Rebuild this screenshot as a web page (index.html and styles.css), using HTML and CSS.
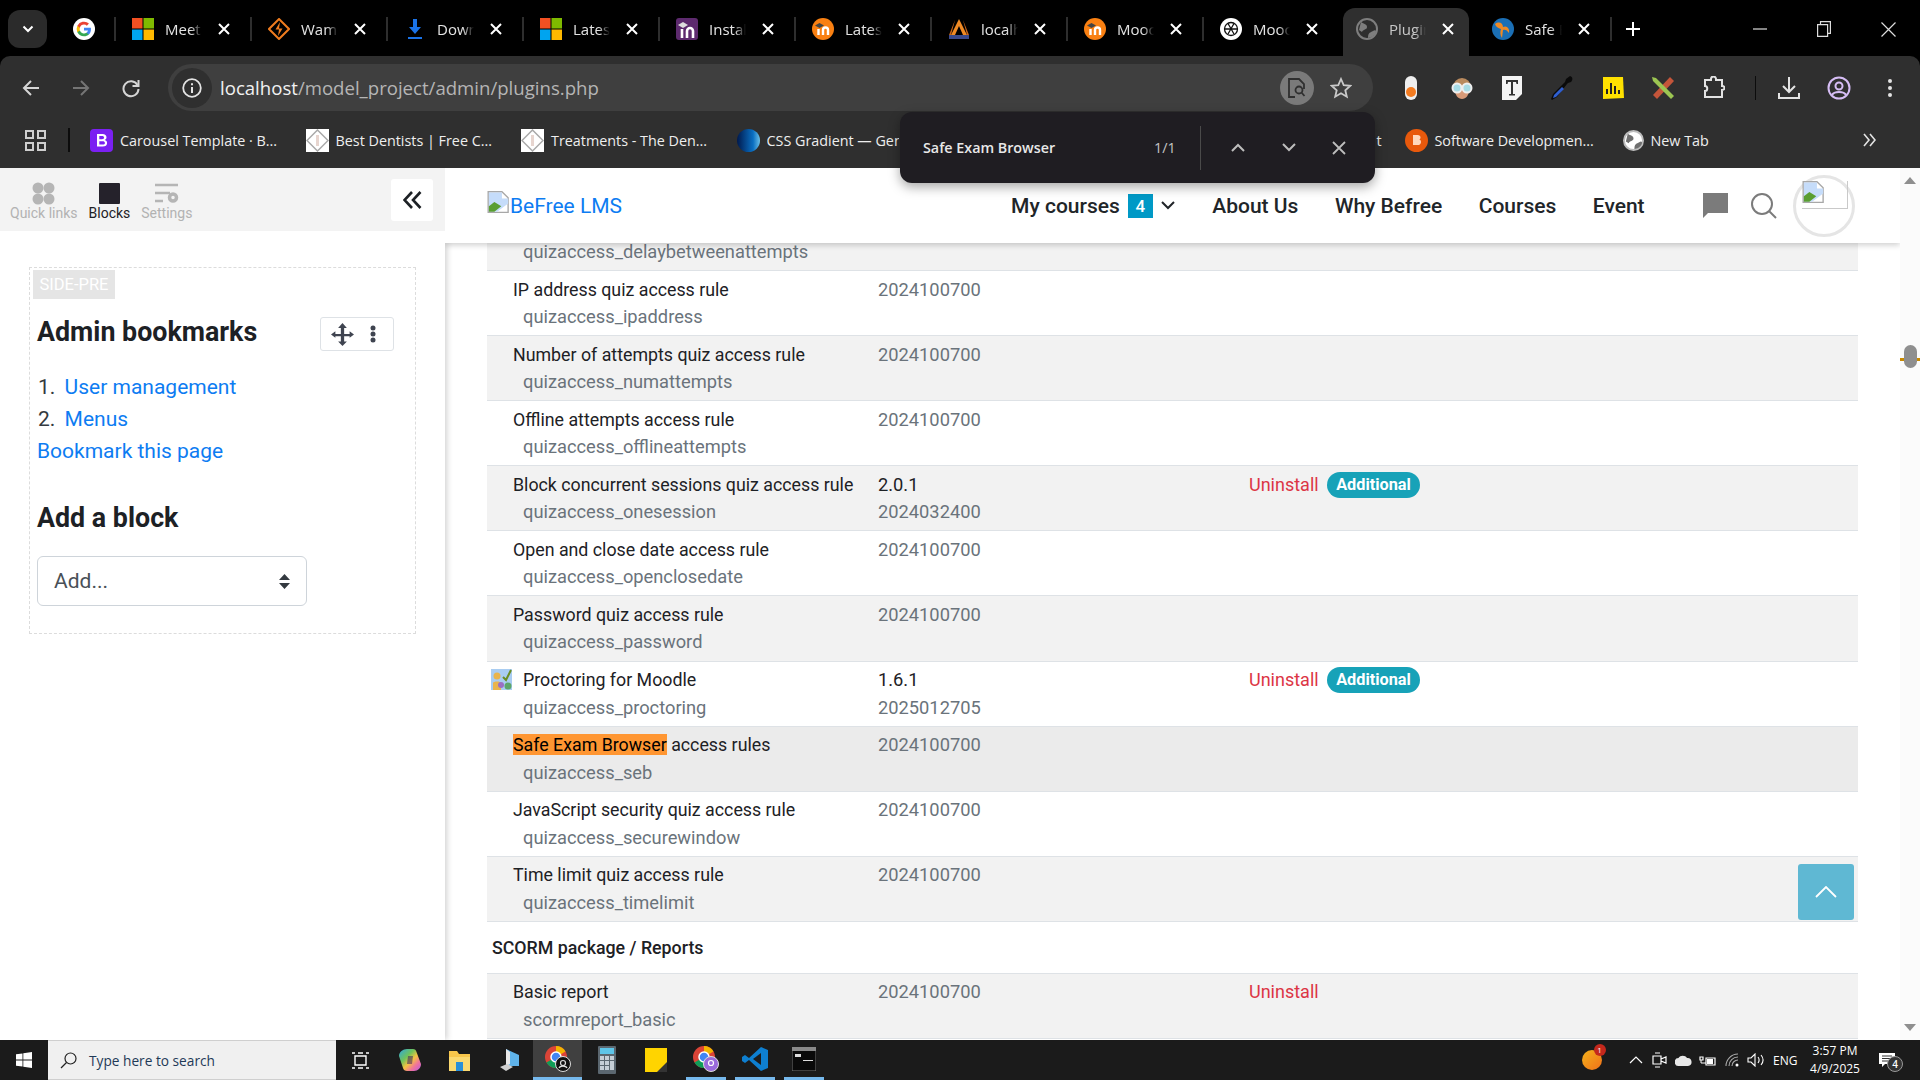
FILE: index.html
```html
<!DOCTYPE html>
<html lang="en">
<head>
	<meta charset="UTF-8">
	<title>Plugins overview</title>
	<link rel="stylesheet" href="styles.css">
</head>
<body>
	<div class="tabstrip">
		<div class="tab-search"><svg width="12" height="8" viewBox="0 0 12 8"><path d="M1.500 1.500 6 6l4.500-4.500" fill="none" stroke="#fff" stroke-width="2"/></svg></div>
		<div class="tab tab-pinned">
			<svg width="22" height="22" viewBox="0 0 24 24"><circle cx="12" cy="12" r="12" fill="#fff"/><path d="M19.600 12.200c0-.6 0-1.100-.2-1.600H12v3h4.300a3.700 3.700 0 0 1-1.600 2.400v2h2.600c1.500-1.400 2.300-3.400 2.300-5.800z" fill="#4285f4"/><path d="M12 20c2.200 0 4-.7 5.300-2l-2.600-2a4.800 4.800 0 0 1-7.200-2.500H4.800v2A8 8 0 0 0 12 20z" fill="#34a853"/><path d="M7.500 13.500a4.800 4.800 0 0 1 0-3v-2H4.800a8 8 0 0 0 0 7z" fill="#fbbc05"/><path d="M12 7.200c1.200 0 2.300.4 3.100 1.200l2.300-2.300A8 8 0 0 0 4.800 8.500l2.700 2A4.800 4.800 0 0 1 12 7.200z" fill="#ea4335"/></svg>
		</div>
		<div class="tab">
			<svg width="22" height="22" viewBox="0 0 22 22"><path fill="#f25022" d="M0 0h10.500v10.500H0z"/><path fill="#7fba00" d="M11.500 0H22v10.500H11.500z"/><path fill="#00a4ef" d="M0 11.500h10.500V22H0z"/><path fill="#ffb900" d="M11.500 11.500H22V22H11.500z"/></svg>
			<span class="tab-title">Meet</span><svg class="tab-close" width="12" height="12" viewBox="0 0 12 12"><path d="m1 1 10 10M11 1 1 11" stroke="#fff" stroke-width="2"/></svg>
		</div>
		<div class="tab">
			<svg width="22" height="22" viewBox="0 0 22 22"><path d="M11 1 21 11 11 21 1 11z" fill="none" stroke="#f07c1e" stroke-width="2"/><path d="M12 4 7.500 11.500H11L10 18l4.500-7.500H11z" fill="#f07c1e"/></svg>
			<span class="tab-title">Wamp</span><svg class="tab-close" width="12" height="12" viewBox="0 0 12 12"><path d="m1 1 10 10M11 1 1 11" stroke="#fff" stroke-width="2"/></svg>
		</div>
		<div class="tab">
			<svg width="22" height="22" viewBox="0 0 22 22"><path d="M9 1h4v8h4l-6 7-6-7h4zM4 19h14v2H4z" fill="#1a73e8"/></svg>
			<span class="tab-title">Down</span><svg class="tab-close" width="12" height="12" viewBox="0 0 12 12"><path d="m1 1 10 10M11 1 1 11" stroke="#fff" stroke-width="2"/></svg>
		</div>
		<div class="tab">
			<svg width="22" height="22" viewBox="0 0 22 22"><path fill="#f25022" d="M0 0h10.500v10.500H0z"/><path fill="#7fba00" d="M11.500 0H22v10.500H11.500z"/><path fill="#00a4ef" d="M0 11.500h10.500V22H0z"/><path fill="#ffb900" d="M11.500 11.500H22V22H11.500z"/></svg>
			<span class="tab-title">Latest</span><svg class="tab-close" width="12" height="12" viewBox="0 0 12 12"><path d="m1 1 10 10M11 1 1 11" stroke="#fff" stroke-width="2"/></svg>
		</div>
		<div class="tab">
			<svg width="22" height="22" viewBox="0 0 22 22"><rect width="22" height="22" rx="3" fill="#5d2a6e"/><path d="M6 20V11M11 20v-7a3 3 0 0 1 6 0v7" fill="none" stroke="#fff" stroke-width="2.600"/><path d="M2 7l5-3 5 3-5 3z" fill="#ddd"/></svg>
			<span class="tab-title">Instal</span><svg class="tab-close" width="12" height="12" viewBox="0 0 12 12"><path d="m1 1 10 10M11 1 1 11" stroke="#fff" stroke-width="2"/></svg>
		</div>
		<div class="tab">
			<svg width="22" height="22" viewBox="0 0 22 22"><circle cx="11" cy="11" r="11" fill="#f98012"/><path d="M6.500 17v-6M11 17v-5a2.500 2.500 0 0 1 5 0v5" fill="none" stroke="#fff" stroke-width="2.400"/><path d="M3 7.500 7.500 5 12 7.500 7.500 10z" fill="#444"/></svg>
			<span class="tab-title">Latest</span><svg class="tab-close" width="12" height="12" viewBox="0 0 12 12"><path d="m1 1 10 10M11 1 1 11" stroke="#fff" stroke-width="2"/></svg>
		</div>
		<div class="tab">
			<svg width="22" height="22" viewBox="0 0 22 22"><path d="M11 1 3 17h4l4-9 4 9h4z" fill="#f08a24"/><path d="M7 2 1 17h2zM15 2l6 15h-2z" fill="#c9651a"/><path d="M1 17h20v4H1z" fill="#3a4a8c"/></svg>
			<span class="tab-title">localh</span><svg class="tab-close" width="12" height="12" viewBox="0 0 12 12"><path d="m1 1 10 10M11 1 1 11" stroke="#fff" stroke-width="2"/></svg>
		</div>
		<div class="tab">
			<svg width="22" height="22" viewBox="0 0 22 22"><circle cx="11" cy="11" r="11" fill="#f98012"/><path d="M6.500 17v-6M11 17v-5a2.500 2.500 0 0 1 5 0v5" fill="none" stroke="#fff" stroke-width="2.400"/><path d="M3 7.500 7.500 5 12 7.500 7.500 10z" fill="#444"/></svg>
			<span class="tab-title">Mooc</span><svg class="tab-close" width="12" height="12" viewBox="0 0 12 12"><path d="m1 1 10 10M11 1 1 11" stroke="#fff" stroke-width="2"/></svg>
		</div>
		<div class="tab tab-before-active">
			<svg width="22" height="22" viewBox="0 0 22 22"><circle cx="11" cy="11" r="11" fill="#fff"/><g fill="none" stroke="#111" stroke-width="1.300"><circle cx="11" cy="11" r="6.500"/><path d="M8 5.500 14 16M14 5.500 8 16M5 11h12"/></g></svg>
			<span class="tab-title">Mooc</span><svg class="tab-close" width="12" height="12" viewBox="0 0 12 12"><path d="m1 1 10 10M11 1 1 11" stroke="#fff" stroke-width="2"/></svg>
		</div>
		<div class="tab tab-active">
			<svg width="22" height="22" viewBox="0 0 22 22"><circle cx="11" cy="11" r="10" fill="none" stroke="#7e7e7e" stroke-width="2"/><path d="M5 4c3 2 6 2 6 5s-4 2-5 5l-3-2zM12 20c0-4 1-5 3-6s4-3 5-1c0 3-3 6-8 7z" fill="#7e7e7e"/></svg>
			<span class="tab-title">Plugin</span><svg class="tab-close" width="12" height="12" viewBox="0 0 12 12"><path d="m1 1 10 10M11 1 1 11" stroke="#fff" stroke-width="2"/></svg>
		</div>
		<div class="tab">
			<svg width="22" height="22" viewBox="0 0 22 22"><circle cx="11" cy="11" r="11" fill="#1b6fb5"/><path d="M3 6c4-3 8-1 8 3 4-2 7 2 6 6-2-3-4-4-6-3l-1 8c-2-3-2-6-1-9C6 10 4 9 3 6z" fill="#f08a24"/></svg>
			<span class="tab-title">Safe E</span><svg class="tab-close" width="12" height="12" viewBox="0 0 12 12"><path d="m1 1 10 10M11 1 1 11" stroke="#fff" stroke-width="2"/></svg>
		</div>
		<div class="tab-new"><svg width="16" height="16" viewBox="0 0 16 16"><path d="M8 1v14M1 8h14" stroke="#fff" stroke-width="2"/></svg></div>
		<div class="window-controls">
			<span><svg width="14" height="14" viewBox="0 0 14 14"><path d="M0 7h14" stroke="#ddd" stroke-width="1.200"/></svg></span>
			<span><svg width="14" height="16" viewBox="0 0 14 16"><path d="M.6 3.600h10v11.800H.6zM3.500 3.500V.6h9.900v11.800h-2.500" fill="none" stroke="#ddd" stroke-width="1.200"/></svg></span>
			<span><svg width="15" height="15" viewBox="0 0 15 15"><path d="m.5.500 14 14M14.500.500l-14 14" stroke="#ddd" stroke-width="1.200"/></svg></span>
		</div>
	</div>

	<div class="toolbar">
		<span class="tool-btn"><svg width="18" height="18" viewBox="0 0 18 18"><path d="M17 9H2M9 2 2 9l7 7" fill="none" stroke="#d5d5d5" stroke-width="2"/></svg></span>
		<span class="tool-btn"><svg width="18" height="18" viewBox="0 0 18 18"><path d="M1 9h15M9 2l7 7-7 7" fill="none" stroke="#757575" stroke-width="2"/></svg></span>
		<span class="tool-btn"><svg width="20" height="20" viewBox="0 0 20 20"><path d="M16.500 7A7.500 7.500 0 1 0 17.500 11" fill="none" stroke="#d5d5d5" stroke-width="2"/><path d="M17.500 2v6h-6" fill="none" stroke="#d5d5d5" stroke-width="2"/></svg></span>
		<div class="omnibox">
			<span class="omni-info"><svg width="20" height="20" viewBox="0 0 20 20"><circle cx="10" cy="10" r="8.800" fill="none" stroke="#e3e3e3" stroke-width="1.800"/><path d="M10 9v6M10 5.200v2" stroke="#e3e3e3" stroke-width="2"/></svg></span>
			<span class="omni-url"><span class="omni-host">localhost</span>/model_project/admin/plugins.php</span>
			<span class="omni-lens"><svg width="18" height="20" viewBox="0 0 18 20"><path d="M7 19H1V1h10l5 5v5" fill="none" stroke="#2f2f2f" stroke-width="1.800"/><circle cx="11" cy="12" r="3.500" fill="none" stroke="#2f2f2f" stroke-width="1.800"/><path d="m13.500 14.500 3 3.500" stroke="#2f2f2f" stroke-width="1.800"/></svg></span>
			<span class="omni-star"><svg width="22" height="22" viewBox="0 0 22 22"><path d="m11 2 2.700 6.100 6.600.7-5 4.400 1.500 6.500-5.800-3.400-5.800 3.400 1.500-6.500-5-4.400 6.600-.7z" fill="none" stroke="#c9c9c9" stroke-width="1.800"/></svg></span>
		</div>
		<span class="ext-btn"><svg width="14" height="26" viewBox="0 0 14 26"><rect x="1" y="1" width="12" height="24" rx="6" fill="#eee"/><circle cx="7" cy="17" r="5" fill="#f37b20"/></svg></span>
		<span class="ext-btn"><svg width="24" height="24" viewBox="0 0 24 24"><circle cx="12" cy="11" r="9" fill="#b98a5e"/><path d="M5 14c0 5 3 9 7 9s7-4 7-9z" fill="#d79a78"/><circle cx="7" cy="12" r="4.500" fill="#a8dce6" stroke="#eee" stroke-width="2"/><circle cx="17" cy="12" r="4.500" fill="#a8dce6" stroke="#eee" stroke-width="2"/></svg></span>
		<span class="ext-btn"><svg width="20" height="24" viewBox="0 0 20 24"><path d="M0 0h20v18l-6 6H0z" fill="#f4f4f4"/><path d="M4 4h12v4h-1.500l-.5-2h-3v12h2v1.500H7V18h2V6H6l-.5 2H4z" fill="#333"/></svg></span>
		<span class="ext-btn"><svg width="24" height="26" viewBox="0 0 24 26"><path d="M20 1c3 1 3 4 1 6l-3 1-1 1L7 22l-5 3-1-1 2-5L14 8l1-1 1-3z" fill="#0a0a0a"/><path d="M12 12 4 20l-1 3 3-1 8-8z" fill="#2f5fd0"/></svg></span>
		<span class="ext-btn"><svg width="24" height="24" viewBox="0 0 24 24"><path d="M2 1h20l1 21-21 1z" fill="#ffe100"/><path d="M6 18v-5M10 18V7M14 18v-8M18 18v-4" stroke="#222" stroke-width="2"/></svg></span>
		<span class="ext-btn"><svg width="24" height="24" viewBox="0 0 24 24"><path d="M2 19 19 1l4 4L6 23z" fill="#c4553a"/><path d="M1 1l4 1 18 18-3 3L2 5z" fill="#9cc552"/></svg></span>
		<span class="ext-btn"><svg width="22" height="24" viewBox="0 0 22 24"><path d="M2 4h6V3a2.500 2.500 0 0 1 5 0v1h6v6c2 0 2.500 1 2.500 2s-.5 2-2.500 2v7H2v-6c3 0 3-5 0-5z" fill="none" stroke="#e3e3e3" stroke-width="2"/></svg></span>
		<span class="tool-sep"></span>
		<span class="ext-btn"><svg width="24" height="24" viewBox="0 0 24 24"><path d="M12 1v15M6 10l6 6 6-6M2 17v5h20v-5" fill="none" stroke="#e3e3e3" stroke-width="2"/></svg></span>
		<span class="ext-btn"><svg width="24" height="24" viewBox="0 0 24 24"><circle cx="12" cy="12" r="10.500" fill="none" stroke="#d6bdf5" stroke-width="2"/><circle cx="12" cy="10" r="3.500" fill="none" stroke="#d6bdf5" stroke-width="2"/><path d="M5 19c2-4 12-4 14 0" fill="none" stroke="#d6bdf5" stroke-width="2"/></svg></span>
		<span class="ext-btn"><svg width="6" height="20" viewBox="0 0 6 20"><circle cx="3" cy="3" r="2" fill="#e3e3e3"/><circle cx="3" cy="10" r="2" fill="#e3e3e3"/><circle cx="3" cy="17" r="2" fill="#e3e3e3"/></svg></span>
	</div>

	<div class="bookmarks">
		<span class="apps"><svg width="21" height="21" viewBox="0 0 21 21"><g fill="none" stroke="#cfcfcf" stroke-width="2"><path d="M1 1h7v7H1zM13 1h7v7h-7zM1 13h7v7H1zM13 13h7v7h-7z"/></g></svg></span>
		<span class="bm-sep"></span>
		<div class="bookmark">
			<svg width="23" height="23" viewBox="0 0 23 23"><rect width="23" height="23" rx="4" fill="#7b20f2"/><path d="M7 5h5.500c2.500 0 4 1.300 4 3.200 0 1.300-.7 2.200-1.800 2.700 1.500.4 2.400 1.500 2.400 3 0 2.300-1.700 3.600-4.400 3.600H7zm2.300 2v3.300h2.700c1.400 0 2.100-.6 2.100-1.700S13.400 7 12 7zm0 5.200v3.400H12.600c1.500 0 2.300-.6 2.300-1.700s-.8-1.700-2.400-1.700z" fill="#fff" fill-rule="evenodd"/></svg>
			<span>Carousel Template · B...</span>
		</div>
		<div class="bookmark">
			<svg width="23" height="23" viewBox="0 0 23 23"><rect width="23" height="23" fill="#fff"/><path d="M11.500 1 22 11.500 11.500 22 1 11.500z" fill="none" stroke="#a9a9a9" stroke-width="1.500"/><path d="M10 6h3v11h-3z" fill="#e7d5cf"/></svg>
			<span>Best Dentists | Free C...</span>
		</div>
		<div class="bookmark">
			<svg width="23" height="23" viewBox="0 0 23 23"><rect width="23" height="23" fill="#fff"/><path d="M11.500 1 22 11.500 11.500 22 1 11.500z" fill="none" stroke="#a9a9a9" stroke-width="1.500"/><path d="M10 6h3v11h-3z" fill="#e7d5cf"/></svg>
			<span>Treatments - The Den...</span>
		</div>
		<div class="bookmark bookmark-gradient">
			<span class="gradient-dot"></span>
			<span class="gradient-text">CSS Gradient — Generator</span>
		</div>
		<div class="bookmark bookmark-hidden"><span>t</span></div>
		<div class="bookmark bookmark-wide">
			<svg width="23" height="23" viewBox="0 0 23 23"><circle cx="11.500" cy="11.500" r="11.500" fill="#e8590c"/><path d="M8 6h4.500c2 0 3 1 3 2.500 0 1-.5 1.700-1.300 2 1.100.3 1.800 1.200 1.800 2.400C16 15 14.700 16 12.700 16H8z" fill="#ffd8bd"/></svg>
			<span>Software Developmen...</span>
		</div>
		<div class="bookmark">
			<svg width="21" height="21" viewBox="0 0 22 22"><circle cx="11" cy="11" r="10" fill="#fff" stroke="#bdbdbd" stroke-width="2"/><path d="M5 4c3 2 6 2 6 5s-4 2-5 5l-3-2zM12 20c0-4 1-5 3-6s4-3 5-1c0 3-3 6-8 7z" fill="#6f6f6f"/></svg>
			<span>New Tab</span>
		</div>
		<span class="bm-more"><svg width="14" height="14" viewBox="0 0 14 14"><path d="m2 1 5 6-5 6M8 1l5 6-5 6" fill="none" stroke="#e3e3e3" stroke-width="1.600"/></svg></span>
	</div>

	<div class="find-bar">
		<span class="find-term">Safe Exam Browser</span>
		<span class="find-count">1/1</span>
		<span class="find-sep"></span>
		<svg class="find-up" width="14" height="9" viewBox="0 0 14 9"><path d="M1 8l6-6 6 6" fill="none" stroke="#bdbdbd" stroke-width="2"/></svg>
		<svg class="find-down" width="14" height="9" viewBox="0 0 14 9"><path d="M1 1l6 6 6-6" fill="none" stroke="#bdbdbd" stroke-width="2"/></svg>
		<svg class="find-close" width="14" height="14" viewBox="0 0 14 14"><path d="m1 1 12 12M13 1 1 13" stroke="#bdbdbd" stroke-width="1.800"/></svg>
	</div>

	<div class="page">
		<aside class="drawer">
			<div class="drawer-tabs">
				<div class="drawer-tab">
					<svg width="23" height="23" viewBox="0 0 23 23"><g fill="#b5b5b5"><circle cx="6" cy="6" r="5.500"/><circle cx="17" cy="6" r="5.500"/><circle cx="6" cy="17" r="5.500"/><circle cx="17" cy="17" r="5.500"/></g></svg>
					<span>Quick links</span>
				</div>
				<div class="drawer-tab drawer-tab-active">
					<svg width="23" height="23" viewBox="0 0 23 23"><rect x="1" y="1" width="21" height="21" rx="1" fill="#25222b"/></svg>
					<span>Blocks</span>
				</div>
				<div class="drawer-tab">
					<svg width="25" height="23" viewBox="0 0 25 23"><path d="M1 3h23M1 11h15M1 19h8" stroke="#b5b5b5" stroke-width="2.500"/><circle cx="19" cy="15.500" r="3.500" fill="none" stroke="#b5b5b5" stroke-width="3.500"/></svg>
					<span>Settings</span>
				</div>
				<button class="drawer-toggle"><svg width="19" height="18" viewBox="0 0 19 18"><path d="M9 1 1.500 9 9 17M17.500 1 10 9l7.500 8" fill="none" stroke="#1d2125" stroke-width="2.600"/></svg></button>
			</div>
			<div class="block-region">
				<div class="region-label">SIDE-PRE</div>
				<div class="block-head">
					<h5>Admin bookmarks</h5>
					<div class="block-controls">
						<svg width="23" height="23" viewBox="0 0 21 21"><path d="M10.500 0l4 4.500h-2.500v5.500H17V7.500l4 3-4 3V12h-5v5h2.500l-4 4-4-4H9v-5H4v1.500l-4-3 4-3V10h5V4.500H6.500z" fill="#3f4450"/></svg>
						<svg width="6" height="18" viewBox="0 0 6 18"><circle cx="3" cy="3" r="2.500" fill="#3f4450"/><circle cx="3" cy="9" r="2.500" fill="#3f4450"/><circle cx="3" cy="15" r="2.500" fill="#3f4450"/></svg>
					</div>
				</div>
				<ol class="bookmark-list">
					<li><a>User management</a></li>
					<li><a>Menus</a></li>
				</ol>
				<a class="bookmark-page">Bookmark this page</a>
				<h5 class="add-title">Add a block</h5>
				<div class="add-select">
					<span>Add...</span>
					<svg width="11" height="15" viewBox="0 0 11 15"><path d="M5.500 0 11 6H0zM5.500 15 0 9h11z" fill="#343a40"/></svg>
				</div>
			</div>
		</aside>

		<main class="main">
			<header class="site-header">
				<a class="brand"><svg class="broken" width="23" height="22" viewBox="0 0 16 16"><path d="M.5.500h10l4.500 4.500v10.500H.5z" fill="#fff" stroke="#a8a8a8"/><path d="M1 1h9.500v4.500H15V9L7 15H1z" fill="#c5dcfa"/><path d="M1 15v-4l4-3 5 3-5 4z" fill="#5a9e32"/></svg>BeFree LMS</a>
				<nav class="site-nav">
					<a>My courses</a>
					<span class="course-count">4</span>
					<svg class="nav-caret" width="14" height="9" viewBox="0 0 14 9"><path d="M1 1l6 6 6-6" fill="none" stroke="#212529" stroke-width="2"/></svg>
					<a class="nav-link">About Us</a>
					<a class="nav-link">Why Befree</a>
					<a class="nav-link">Courses</a>
					<a class="nav-link">Event</a>
				</nav>
				<svg class="head-chat" width="25" height="25" viewBox="0 0 25 25"><path d="M0 0h25v20H5l-5 5z" fill="#7b7b7b"/></svg>
				<svg class="head-search" width="27" height="27" viewBox="0 0 27 27"><circle cx="12" cy="12" r="10" fill="none" stroke="#7b7b7b" stroke-width="2"/><path d="m19 19 7 7" stroke="#7b7b7b" stroke-width="2"/></svg>
				<div class="avatar"><span class="avatar-img"><svg width="23" height="22" viewBox="0 0 16 16"><path d="M.5.500h10l4.500 4.500v10.500H.5z" fill="#fff" stroke="#a8a8a8"/><path d="M1 1h9.500v4.500H15V9L7 15H1z" fill="#c5dcfa"/><path d="M1 15v-4l4-3 5 3-5 4z" fill="#5a9e32"/></svg></span></div>
			</header>

			<table class="plugins" cellspacing="0">
				<tr class="row-grey">
					<td class="col-name"><span class="name">&nbsp;</span><span class="comp">quizaccess_delaybetweenattempts</span></td>
					<td class="col-ver"></td>
					<td class="col-act"></td>
				</tr>
				<tr>
					<td class="col-name"><span class="name">IP address quiz access rule</span><span class="comp">quizaccess_ipaddress</span></td>
					<td class="col-ver">2024100700</td>
					<td class="col-act"></td>
				</tr>
				<tr class="row-grey">
					<td class="col-name"><span class="name">Number of attempts quiz access rule</span><span class="comp">quizaccess_numattempts</span></td>
					<td class="col-ver">2024100700</td>
					<td class="col-act"></td>
				</tr>
				<tr>
					<td class="col-name"><span class="name">Offline attempts access rule</span><span class="comp">quizaccess_offlineattempts</span></td>
					<td class="col-ver">2024100700</td>
					<td class="col-act"></td>
				</tr>
				<tr class="row-grey">
					<td class="col-name"><span class="name">Block concurrent sessions quiz access rule</span><span class="comp">quizaccess_onesession</span></td>
					<td class="col-ver"><span class="release">2.0.1</span>2024032400</td>
					<td class="col-act"><a class="uninstall">Uninstall</a><span class="badge-add">Additional</span></td>
				</tr>
				<tr>
					<td class="col-name"><span class="name">Open and close date access rule</span><span class="comp">quizaccess_openclosedate</span></td>
					<td class="col-ver">2024100700</td>
					<td class="col-act"></td>
				</tr>
				<tr class="row-grey">
					<td class="col-name"><span class="name">Password quiz access rule</span><span class="comp">quizaccess_password</span></td>
					<td class="col-ver">2024100700</td>
					<td class="col-act"></td>
				</tr>
				<tr>
					<td class="col-name"><span class="name name-icon"><svg class="plugin-icon" width="21" height="21" viewBox="0 0 21 21"><rect width="21" height="21" fill="#a9cdf2"/><path d="m12 8 3 3 5-10" fill="none" stroke="#6b8e23" stroke-width="2"/><circle cx="6" cy="7" r="3.500" fill="#e9b44c"/><path d="M2 21v-7c0-2 8-2 8 0v7z" fill="#e9b44c"/><circle cx="10" cy="16" r="3" fill="#9b6fc4"/><circle cx="17" cy="17" r="3.500" fill="#5da66a"/></svg>Proctoring for Moodle</span><span class="comp">quizaccess_proctoring</span></td>
					<td class="col-ver"><span class="release">1.6.1</span>2025012705</td>
					<td class="col-act"><a class="uninstall">Uninstall</a><span class="badge-add">Additional</span></td>
				</tr>
				<tr class="row-hover">
					<td class="col-name"><span class="name"><mark>Safe Exam Browser</mark> access rules</span><span class="comp">quizaccess_seb</span></td>
					<td class="col-ver">2024100700</td>
					<td class="col-act"></td>
				</tr>
				<tr>
					<td class="col-name"><span class="name">JavaScript security quiz access rule</span><span class="comp">quizaccess_securewindow</span></td>
					<td class="col-ver">2024100700</td>
					<td class="col-act"></td>
				</tr>
				<tr class="row-grey">
					<td class="col-name"><span class="name">Time limit quiz access rule</span><span class="comp">quizaccess_timelimit</span></td>
					<td class="col-ver">2024100700</td>
					<td class="col-act"></td>
				</tr>
				<tr>
					<th class="section-head" colspan="3">SCORM package / Reports</th>
				</tr>
				<tr class="row-grey">
					<td class="col-name"><span class="name">Basic report</span><span class="comp">scormreport_basic</span></td>
					<td class="col-ver">2024100700</td>
					<td class="col-act"><a class="uninstall">Uninstall</a></td>
				</tr>
			</table>

			<a class="back-top"><svg width="22" height="12" viewBox="0 0 22 12"><path d="M1 11 11 1l10 10" fill="none" stroke="#fff" stroke-width="1.800"/></svg></a>
		</main>

		<div class="scrollbar">
			<span class="scroll-up"></span>
			<span class="scroll-mark"></span>
			<span class="scroll-thumb"></span>
			<span class="scroll-down"></span>
		</div>
	</div>

	<div class="taskbar">
		<span class="start"><svg width="16" height="16" viewBox="0 0 16 16"><path d="M0 2.300 6.500 1.400v6.200H0zM7.300 1.300 16 0v7.600H7.300zM0 8.400h6.500v6.200L0 13.700zM7.300 8.400H16V16l-8.700-1.300z" fill="#fff"/></svg></span>
		<div class="task-search">
			<svg width="17" height="17" viewBox="0 0 17 17"><circle cx="10.500" cy="6.500" r="5.500" fill="none" stroke="#222" stroke-width="1.200"/><path d="M6.500 10.500 1 16" stroke="#222" stroke-width="1.200"/></svg>
			<span>Type here to search</span>
		</div>
		<div class="task-apps">
			<span class="task-app"><svg width="17" height="17" viewBox="0 0 17 17"><path d="M3 4h11v9H3zM0 1h3M0 16h3M14 1h3M14 16h3M6 1h5M6 16h5" fill="none" stroke="#fff" stroke-width="1.400"/></svg></span>
			<span class="task-app"><svg width="24" height="24" viewBox="0 0 24 24"><defs><linearGradient id="cop" x1="0" y1="0" x2="1" y2="1"><stop offset="0" stop-color="#2ea7e0"/><stop offset=".35" stop-color="#6fc35a"/><stop offset=".55" stop-color="#f5c242"/><stop offset=".75" stop-color="#f0739a"/><stop offset="1" stop-color="#b65ce3"/></linearGradient></defs><path d="M9 1h6c2 0 3 1 3.500 3L23 16c0 4-3 7-7 7H9c-2 0-3.500-1-4-3L1 8c0-4 4-7 8-7z" fill="url(#cop)"/><path d="M10 8h5l-1 8H9z" fill="#35205f" opacity=".55"/></svg></span>
			<span class="task-app"><svg width="23" height="23" viewBox="0 0 23 23"><path d="M1 2h8l2 3h11v17H1z" fill="#f8c64b"/><path d="M1 8h21v14H1z" fill="#fbd970"/><path d="M8 13h7v9H8z" fill="#2a8fd8"/></svg></span>
			<span class="task-app"><svg width="24" height="24" viewBox="0 0 24 24"><path d="M9 1l13 6v11H9z" fill="#5fb3ea"/><path d="M9 1v17l4-2V4z" fill="#e8e8e8"/><path d="M3 19l7-3 6 3-7 4z" fill="#cfcfcf"/></svg></span>
			<span class="task-app task-app-active"><svg width="26" height="26" viewBox="0 0 26 26"><circle cx="11" cy="11" r="11" fill="#db4437"/><path d="M11 11 1.500 16.500A11 11 0 0 0 11 22z" fill="#0f9d58"/><path d="M11 11V0h0a11 11 0 0 1 9.500 5.500z" fill="#f4b400"/><circle cx="11" cy="11" r="5" fill="#4285f4" stroke="#fff" stroke-width="1.500"/><circle cx="18" cy="18" r="7.500" fill="#111" stroke="#ddd" stroke-width="1"/><circle cx="18" cy="17" r="2.500" fill="none" stroke="#ddd" stroke-width="1.200"/><path d="M14 22c1-2.500 7-2.500 8 0" fill="none" stroke="#ddd" stroke-width="1.200"/></svg></span>
			<span class="task-app"><svg width="18" height="28" viewBox="0 0 18 28"><rect width="18" height="28" rx="1" fill="#5b6770"/><rect x="2" y="2" width="14" height="6" fill="#5ec5e8"/><path d="M2 10h4v4H2zM7 10h4v4H7zM12 10h4v4h-4zM2 15h4v4H2zM7 15h4v4H7zM12 15h4v9h-4zM2 20h4v4H2zM7 20h4v4H7z" fill="#c5ced6"/></svg></span>
			<span class="task-app"><svg width="22" height="24" viewBox="0 0 22 24"><path d="M0 0h22v24H0z" fill="#ffd400"/><path d="M12 24l10-10v10z" fill="#333"/></svg></span>
			<span class="task-app task-app-open"><svg width="26" height="26" viewBox="0 0 26 26"><circle cx="11" cy="11" r="11" fill="#db4437"/><path d="M11 11 1.500 16.500A11 11 0 0 0 11 22z" fill="#0f9d58"/><path d="M11 11V0h0a11 11 0 0 1 9.500 5.500z" fill="#f4b400"/><circle cx="11" cy="11" r="5" fill="#4285f4" stroke="#fff" stroke-width="1.500"/><circle cx="18" cy="18" r="7.500" fill="#9a6bdc" stroke="#ddd" stroke-width="1"/><circle cx="18" cy="17" r="2.500" fill="none" stroke="#fff" stroke-width="1.200"/></svg></span>
			<span class="task-app task-app-open"><svg width="26" height="26" viewBox="0 0 26 26"><path d="M19 1 26 4v18l-7 3L7 14l-4 3-3-2V11l3-2 4 3z" fill="#0e7fd0"/><path d="M19 7v12l-8-6z" fill="#1c1c1c"/></svg></span>
			<span class="task-app task-app-open"><svg width="24" height="24" viewBox="0 0 24 24"><rect width="24" height="24" rx="1" fill="#0a0a0a" stroke="#777"/><path d="M0 0h24v4H0z" fill="#8a8a8a"/><path d="M3 7h6v3H3zM11 13h10v1H11z" fill="#ddd"/></svg></span>
		</div>
		<div class="tray">
			<span class="tray-blob"><span class="tray-alert">1</span></span>
			<svg class="tray-up" width="14" height="8" viewBox="0 0 14 8"><path d="M1 7l6-6 6 6" fill="none" stroke="#fff" stroke-width="1.200"/></svg>
			<svg class="tray-meet" width="15" height="18" viewBox="0 0 15 18"><path d="M1 5h8v8H1zM9 8l5-2v6l-5-2" fill="none" stroke="#fff" stroke-width="1.200"/><path d="M3 2h5M3 16h5" stroke="#fff"/></svg>
			<svg class="tray-cloud" width="17" height="11" viewBox="0 0 17 11"><path d="M4 11a4 4 0 0 1-.5-8A5 5 0 0 1 12 3a4 4 0 0 1 1 8z" fill="#e8e8e8"/></svg>
			<svg class="tray-power" width="17" height="14" viewBox="0 0 17 14"><path d="M1 4h3v3H1zM7 5h9v7H7z" fill="none" stroke="#fff" stroke-width="1.200"/><path d="M8 6h6v5H8z" fill="#fff"/><path d="M2 7v3h5" fill="none" stroke="#fff"/></svg>
			<svg class="tray-wifi" width="15" height="14" viewBox="0 0 15 14"><path d="M1 13A12 12 0 0 1 13 1M4 13a9 9 0 0 1 9-9M7 13a6 6 0 0 1 6-6" fill="none" stroke="#aaa" stroke-width="1.100"/><circle cx="12" cy="12" r="1.500" fill="#fff"/></svg>
			<svg class="tray-sound" width="17" height="14" viewBox="0 0 17 14"><path d="M1 5h3l4-4v12L4 9H1zM11 4c1.500 2 1.500 4 0 6M14 2c2.500 3 2.500 7 0 10" fill="none" stroke="#fff" stroke-width="1.100"/></svg>
			<span class="tray-lang">ENG</span>
			<div class="clock"><span>3:57 PM</span><span>4/9/2025</span></div>
			<span class="notify"><svg width="16" height="14" viewBox="0 0 16 14"><path d="M0 0h16v11H6l-3 3v-3H0z" fill="#fff"/><path d="M3 3h10M3 5.500h10M3 8h7" stroke="#333"/></svg><span class="notify-count">4</span></span>
		</div>
	</div>
</body>
</html>
```

FILE: styles.css
```css
* {
	margin: 0;
	padding: 0;
	box-sizing: border-box;
}

html, body {
	height: 100%;
	overflow: hidden;
}

body {
	position: relative;
	display: flex;
	flex-direction: column;
	width: 1920px;
	height: 1080px;
	background: #000;
	font-family: Roboto, "Liberation Sans", sans-serif;
	font-size: 17.8px;
	color: #1d2125;
}

svg {
	flex: none;
	display: block;
}

/* browser tabs */
.tabstrip {
	display: flex;
	align-items: center;
	height: 56px;
	padding: 2px 0 0 8px;
	background: #000;
	font-family: "Open Sans", sans-serif;
	font-size: 15px;
	color: #e3e3e3;
}

.tab-search {
	display: flex;
	align-items: center;
	justify-content: center;
	width: 39px;
	height: 38px;
	margin-right: 13px;
	border-radius: 12px;
	background: #2b2b2b;
}

.tab {
	display: flex;
	align-items: center;
	width: 136px;
	height: 24px;
	padding-left: 16px;
	border-right: 2px solid #2e2e2e;
}

.tab-pinned {
	width: 56px;
	padding-left: 13px;
}

.tab-title {
	width: 37px;
	margin-left: 11px;
	overflow: hidden;
	white-space: nowrap;
	-webkit-mask-image: linear-gradient(to right, #000 70%, transparent);
	mask-image: linear-gradient(to right, #000 70%, transparent);
}

.tab-close {
	margin-left: 16px;
}

.tab-before-active {
	border-right: none;
}

.tab-active {
	align-self: flex-end;
	width: 126px;
	height: 48px;
	margin: 0 7px 0 3px;
	padding: 0 0 6px 13px;
	border: none;
	border-radius: 12px 12px 0 0;
	background: #2f2f2f;
	color: #c8c8c8;
}

.tab-new {
	margin-left: 13px;
}

.window-controls {
	display: flex;
	margin-left: auto;
}

.window-controls span {
	display: flex;
	align-items: center;
	justify-content: center;
	width: 64px;
}

/* address bar */
.toolbar {
	display: flex;
	align-items: flex-start;
	height: 56px;
	padding: 8px 0 0 6px;
	border-radius: 10px 10px 0 0;
	background: #2f2f2f;
}

.tool-btn {
	display: flex;
	align-items: center;
	justify-content: center;
	width: 50px;
	height: 47px;
}

.omnibox {
	display: flex;
	align-items: center;
	width: 1205px;
	height: 47px;
	margin: 0 13px 0 12px;
	padding-left: 4px;
	border-radius: 24px;
	background: #3f3f3f;
	font-family: "Open Sans", sans-serif;
	font-size: 18.600px;
	color: #b5b5b5;
}

.omni-info {
	display: flex;
	align-items: center;
	justify-content: center;
	width: 40px;
	height: 40px;
	border-radius: 50%;
	background: #2f2f2f;
}

.omni-url {
	margin-left: 8px;
}

.omni-host {
	color: #f1f1f1;
}

.omni-lens {
	display: flex;
	align-items: center;
	justify-content: center;
	width: 34px;
	height: 34px;
	margin-left: auto;
	border-radius: 50%;
	background: #7a7a7a;
}

.omni-star {
	margin: 0 21px 0 16px;
}

.ext-btn {
	display: flex;
	align-items: center;
	justify-content: center;
	width: 50.400px;
	height: 47px;
}

.tool-sep {
	width: 1px;
	height: 24px;
	margin: 12px 8px 0 16px;
	background: #0c0c0c;
}

/* bookmarks bar */
.bookmarks {
	display: flex;
	align-items: center;
	height: 56px;
	padding-left: 25px;
	background: #2f2f2f;
	font-family: "Open Sans", sans-serif;
	font-size: 14.350px;
	color: #eee;
}

.bm-sep {
	width: 2px;
	height: 24px;
	margin: 0 20px 0 22px;
	background: #0c0c0c;
}

.bookmark {
	display: flex;
	align-items: center;
	flex: none;
	gap: 7px;
	width: 215.500px;
	white-space: nowrap;
}

.bookmark-gradient {
	width: 640px;
}

.bookmark-hidden {
	width: 28px;
}

.bookmark-wide {
	width: 218px;
}

.gradient-dot {
	flex: none;
	width: 23px;
	height: 23px;
	border-radius: 50%;
	background: linear-gradient(90deg, #00194d, #0a6fc2 70%, #6cc0e8);
}

.gradient-text {
	width: 132px;
	overflow: hidden;
}

.bm-more {
	margin-left: 24px;
}

/* find in page */
.find-bar {
	position: absolute;
	top: 112px;
	left: 900px;
	z-index: 5;
	display: flex;
	align-items: center;
	width: 475px;
	height: 71px;
	padding-left: 23px;
	border-radius: 12px;
	background: #1f1d22;
	box-shadow: 0 4px 12px rgba(0, 0, 0, .35);
	font-family: "Open Sans", sans-serif;
	font-size: 14.300px;
	font-weight: 600;
	color: #e8e8e8;
}

.find-term {
	width: 231px;
}

.find-count {
	width: 46px;
	font-weight: 400;
	color: #c4c4c4;
}

.find-sep {
	width: 1px;
	height: 44px;
	margin-right: 30px;
	background: #4a4a4a;
}

.find-up {
	margin-right: 37px;
}

.find-down {
	margin-right: 36px;
}

/* page */
.page {
	display: flex;
	flex: none;
	height: 872px;
	background: #fff;
	overflow: hidden;
}

.drawer {
	position: relative;
	z-index: 2;
	flex: none;
	width: 445px;
	background: #fff;
	box-shadow: 2px 0 6px rgba(0, 0, 0, .18);
}

.drawer-tabs {
	display: flex;
	align-items: flex-start;
	gap: 11px;
	height: 63px;
	padding: 14px 12px 0 10px;
	background: #f3f3f3;
	font-size: 14px;
	color: #b2b2b2;
}

.drawer-tab {
	display: flex;
	flex-direction: column;
	align-items: center;
}

.drawer-tab-active {
	color: #1d2125;
}

.drawer-toggle {
	display: flex;
	align-items: center;
	justify-content: center;
	width: 42px;
	height: 42px;
	margin: -3px 0 0 auto;
	border: none;
	border-radius: 3px;
	background: #fff;
}

.block-region {
	width: 387px;
	height: 367px;
	margin: 36px 0 0 29px;
	padding: 2px 0 0 3px;
	border: 1px dashed #dcdcdc;
}

.region-label {
	width: 82px;
	height: 29px;
	background: #e5e5e5;
	font-size: 16.500px;
	line-height: 29px;
	text-align: center;
	color: #fff;
}

.block-head {
	display: flex;
	justify-content: space-between;
	align-items: flex-start;
	height: 53px;
	margin: 16px 21px 0 4px;
}

h5 {
	font-size: 26.800px;
	font-weight: 700;
	line-height: 34px;
}

.block-controls {
	display: flex;
	align-items: center;
	gap: 16px;
	width: 74px;
	height: 34px;
	margin-top: 2px;
	padding-left: 10px;
	border: 1px solid #dee2e6;
	border-radius: 3px;
}

.bookmark-list {
	margin: 3px 0 0 5px;
	list-style-position: inside;
	font-size: 21px;
	line-height: 32px;
	color: #343a40;
}

.bookmark-list a, .bookmark-page {
	color: #0d7cf2;
}

.bookmark-list a {
	margin-left: 4px;
}

.bookmark-page {
	display: block;
	margin-left: 4px;
	font-size: 21px;
	line-height: 32px;
}

.add-title {
	margin: 34px 0 0 4px;
}

.add-select {
	display: flex;
	align-items: center;
	justify-content: space-between;
	width: 270px;
	height: 50px;
	margin: 21px 0 0 4px;
	padding: 0 16px 0 16px;
	border: 1px solid #ced4da;
	border-radius: 6px;
	font-size: 21px;
	color: #495057;
}

.main {
	position: relative;
	flex: none;
	width: 1455px;
	padding: 38px 42px 0 42px;
	overflow: hidden;
}

.site-header {
	position: absolute;
	top: 0;
	left: 0;
	z-index: 3;
	display: flex;
	align-items: center;
	width: 100%;
	height: 75px;
	padding-left: 42px;
	background: #fff;
	box-shadow: 0 2px 6px rgba(0, 0, 0, .2);
}

.brand {
	display: flex;
	align-items: center;
	font-size: 21px;
	color: #0d7cf2;
}

.broken {
	margin-top: -8px;
}

.site-nav {
	display: flex;
	align-items: center;
	margin-left: 389px;
	font-size: 21px;
	font-weight: 500;
	color: #212529;
}

.course-count {
	width: 25px;
	height: 24px;
	margin-left: 8px;
	background: #0099c6;
	font-size: 17px;
	line-height: 24px;
	text-align: center;
	color: #fff;
}

.nav-caret {
	margin: 0 1px 0 8px;
}

.nav-link {
	margin-left: 36.500px;
}

.head-chat {
	margin-left: 58.500px;
}

.head-search {
	margin-left: 22px;
}

.avatar {
	flex: none;
	width: 62px;
	height: 62px;
	margin-left: 16px;
	border: 3px solid #e5e5e5;
	border-radius: 50%;
	background: #fff;
}

.avatar-img {
	display: block;
	width: 46px;
	height: 28px;
	margin: 3px 0 0 6px;
	border: 1px solid #c9c9c9;
	border-top: none;
	border-left: none;
}

table.plugins {
	width: 1371px;
	table-layout: fixed;
	border-collapse: separate;
	line-height: 27px;
}

.plugins td {
	height: 65.080px;
	padding-top: 4.500px;
	vertical-align: top;
	border-bottom: 1px solid #dee2e6;
}

.row-grey td {
	background: #f2f2f2;
}

.row-hover td {
	background: #ebebeb;
}

.col-name {
	width: 391px;
}

.col-ver {
	width: 371px;
	font-size: 18.300px;
	color: #6a737b;
}

.name {
	display: block;
	padding-left: 26px;
	white-space: nowrap;
}

.name-icon {
	display: flex;
	align-items: center;
	padding-left: 4px;
}

.plugin-icon {
	margin-right: 11px;
}

.comp {
	display: block;
	margin-top: .5px;
	padding-left: 36px;
	font-size: 18.300px;
	color: #6a737b;
}

.release {
	display: block;
	margin-bottom: .5px;
	color: #1d2125;
}

mark {
	background: #ff9632;
	color: #000;
}

.uninstall {
	font-size: 18px;
	color: #dc3545;
}

.badge-add {
	display: inline-block;
	height: 26px;
	margin: 1px 0 0 8px;
	padding: 0 9.500px;
	border-radius: 13px;
	background: #17a2b8;
	font-size: 16.300px;
	font-weight: 700;
	line-height: 26px;
	vertical-align: top;
	color: #fff;
}

.section-head {
	height: 52px;
	padding-left: 5px;
	border-bottom: 1px solid #dee2e6;
	font-weight: 500;
	text-align: left;
}

.back-top {
	position: absolute;
	top: 696px;
	left: 1353px;
	display: flex;
	align-items: center;
	justify-content: center;
	width: 56px;
	height: 56px;
	border-radius: 3px;
	background: #5fb8d3;
}

.scrollbar {
	position: relative;
	flex: none;
	width: 20px;
	background: #fbfbfb;
}

.scroll-up, .scroll-down {
	position: absolute;
	left: 4px;
	width: 0;
	height: 0;
	border-left: 6px solid transparent;
	border-right: 6px solid transparent;
}

.scroll-up {
	top: 9px;
	border-bottom: 7px solid #8f8f8f;
}

.scroll-down {
	bottom: 9px;
	border-top: 7px solid #8f8f8f;
}

.scroll-mark {
	position: absolute;
	top: 190px;
	left: 0;
	width: 20px;
	height: 3px;
	background: #c98a00;
}

.scroll-thumb {
	position: absolute;
	top: 177px;
	left: 4px;
	width: 13px;
	height: 23px;
	border-radius: 7px;
	background: #8f8f8f;
}

/* windows taskbar */
.taskbar {
	display: flex;
	align-items: center;
	flex: none;
	height: 40px;
	background: #1b1b1b;
	font-family: "Open Sans", sans-serif;
	color: #fff;
}

.start {
	display: flex;
	justify-content: center;
	width: 48px;
}

.task-search {
	display: flex;
	align-items: center;
	gap: 12px;
	width: 288px;
	height: 40px;
	padding-left: 12px;
	border: 1px solid #cfcfcf;
	border-width: 1px 0;
	background: #f0f0f0;
	font-size: 13.700px;
	color: #1f3a57;
}

.task-apps {
	display: flex;
}

.task-app {
	display: flex;
	align-items: center;
	justify-content: center;
	width: 49.300px;
	height: 40px;
}

.task-app-active {
	background: #404040;
	border-bottom: 3px solid #76b9ed;
}

.task-app-open {
	width: 40px;
	margin: 0 4.650px;
	border-bottom: 3px solid #76b9ed;
}

.tray {
	display: flex;
	align-items: center;
	margin-left: auto;
	font-size: 12px;
}

.tray-blob {
	position: relative;
	width: 20px;
	height: 20px;
	border-radius: 50%;
	background: linear-gradient(135deg, #f5b21a, #f0701a);
}

.tray-alert {
	position: absolute;
	top: -6px;
	right: -4px;
	width: 12px;
	height: 12px;
	border-radius: 50%;
	background: #c4281c;
	font-size: 8px;
	line-height: 12px;
	text-align: center;
}

.tray-up {
	margin-left: 27px;
}

.tray-meet {
	margin-left: 9.500px;
}

.tray-cloud {
	margin-left: 8px;
}

.tray-power {
	margin-left: 7px;
}

.tray-wifi {
	margin-left: 9px;
}

.tray-sound {
	margin-left: 7px;
}

.tray-lang {
	width: 24px;
	margin-left: 9px;
}

.clock {
	display: flex;
	flex-direction: column;
	align-items: center;
	width: 60px;
	margin-left: 8px;
	line-height: 18px;
}

.notify {
	position: relative;
	display: flex;
	width: 55px;
	padding-left: 14px;
}

.notify-count {
	position: absolute;
	top: 3px;
	left: 22px;
	width: 16px;
	height: 16px;
	border: 1px solid #999;
	border-radius: 50%;
	background: #333;
	font-size: 10px;
	font-weight: 600;
	line-height: 14px;
	text-align: center;
}
```
